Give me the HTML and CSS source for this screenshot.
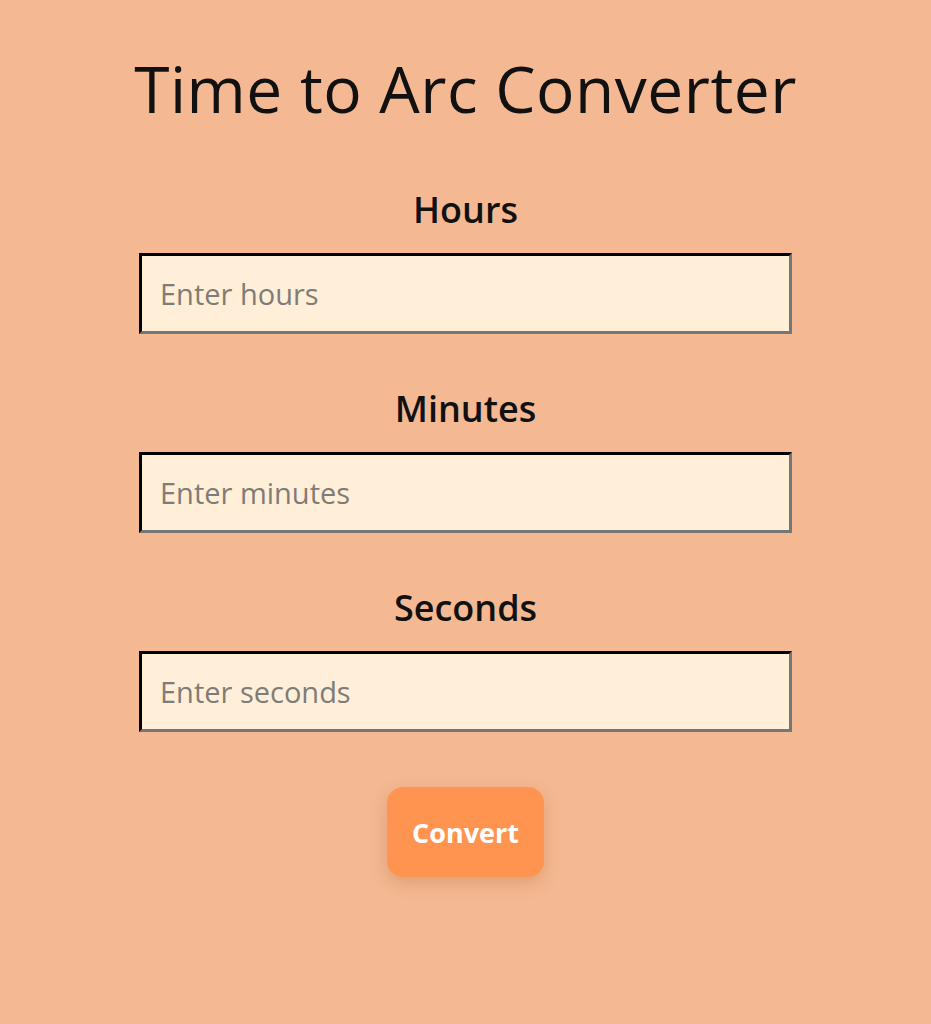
FILE: index.html
```html
<!DOCTYPE html>
<html lang="en">
<head>
    <meta charset="UTF-8">
    <meta name="viewport" content="width=device-width, initial-scale=1.0">
    <title>Time to Arc Converter</title>
    <link rel="stylesheet" href="styles.css">
</head>
<body>
    <div class="container">
        <h1>Time to Arc Converter</h1>

        <div class="form-group">
            <label for="hours">Hours</label>
            <input type="number" id="hours" placeholder="Enter hours">
        </div>

        <div class="form-group">
            <label for="minutes">Minutes</label>
            <input type="number" id="minutes" placeholder="Enter minutes">
        </div>

        <div class="form-group">
            <label for="seconds">Seconds</label>
            <input type="number" id="seconds" placeholder="Enter seconds">
        </div>

        <button class="convert-btn">Convert</button>
    </div>
</body>
</html>
```

FILE: styles.css
```css
html {
    background-color: #f4b992;
}

body {
    font-family: 'Open Sans', 'Noto Sans', sans-serif;
    color: #111;
    margin: 0;
    padding: 47px 0 80px;
}

.container {
    width: 653px;
    margin: 0 auto;
    display: flex;
    flex-direction: column;
    align-items: center;
}

h1 {
    font-size: 64px;
    font-weight: 400;
    line-height: 84px;
    letter-spacing: 0.5px;
    margin: 0 0 57px;
    white-space: nowrap;
}

.form-group {
    width: 100%;
    display: flex;
    flex-direction: column;
    align-items: center;
    gap: 21px;
    margin-bottom: 53px;
}

.form-group:last-of-type {
    margin-bottom: 55px;
}

label {
    font-size: 36px;
    font-weight: 600;
    line-height: 44px;
}

input {
    box-sizing: border-box;
    width: 100%;
    height: 81px;
    padding: 0 18px;
    border: 3px inset #767676;
    border-top-color: #1a1208;
    border-left-color: #1a1208;
    background-color: #ffefd8;
    font-family: inherit;
    font-size: 29px;
    color: #333;
    outline: none;
}

input::placeholder {
    color: #7f7c77;
}

input::-webkit-outer-spin-button,
input::-webkit-inner-spin-button {
    -webkit-appearance: none;
    margin: 0;
}

.convert-btn {
    width: 157px;
    height: 90px;
    border: none;
    border-radius: 16px;
    background-color: #ff9450;
    color: #fff;
    font-family: inherit;
    font-size: 27px;
    font-weight: 700;
    cursor: pointer;
    box-shadow: 0 6px 16px rgba(160, 80, 30, 0.25);
}
```
